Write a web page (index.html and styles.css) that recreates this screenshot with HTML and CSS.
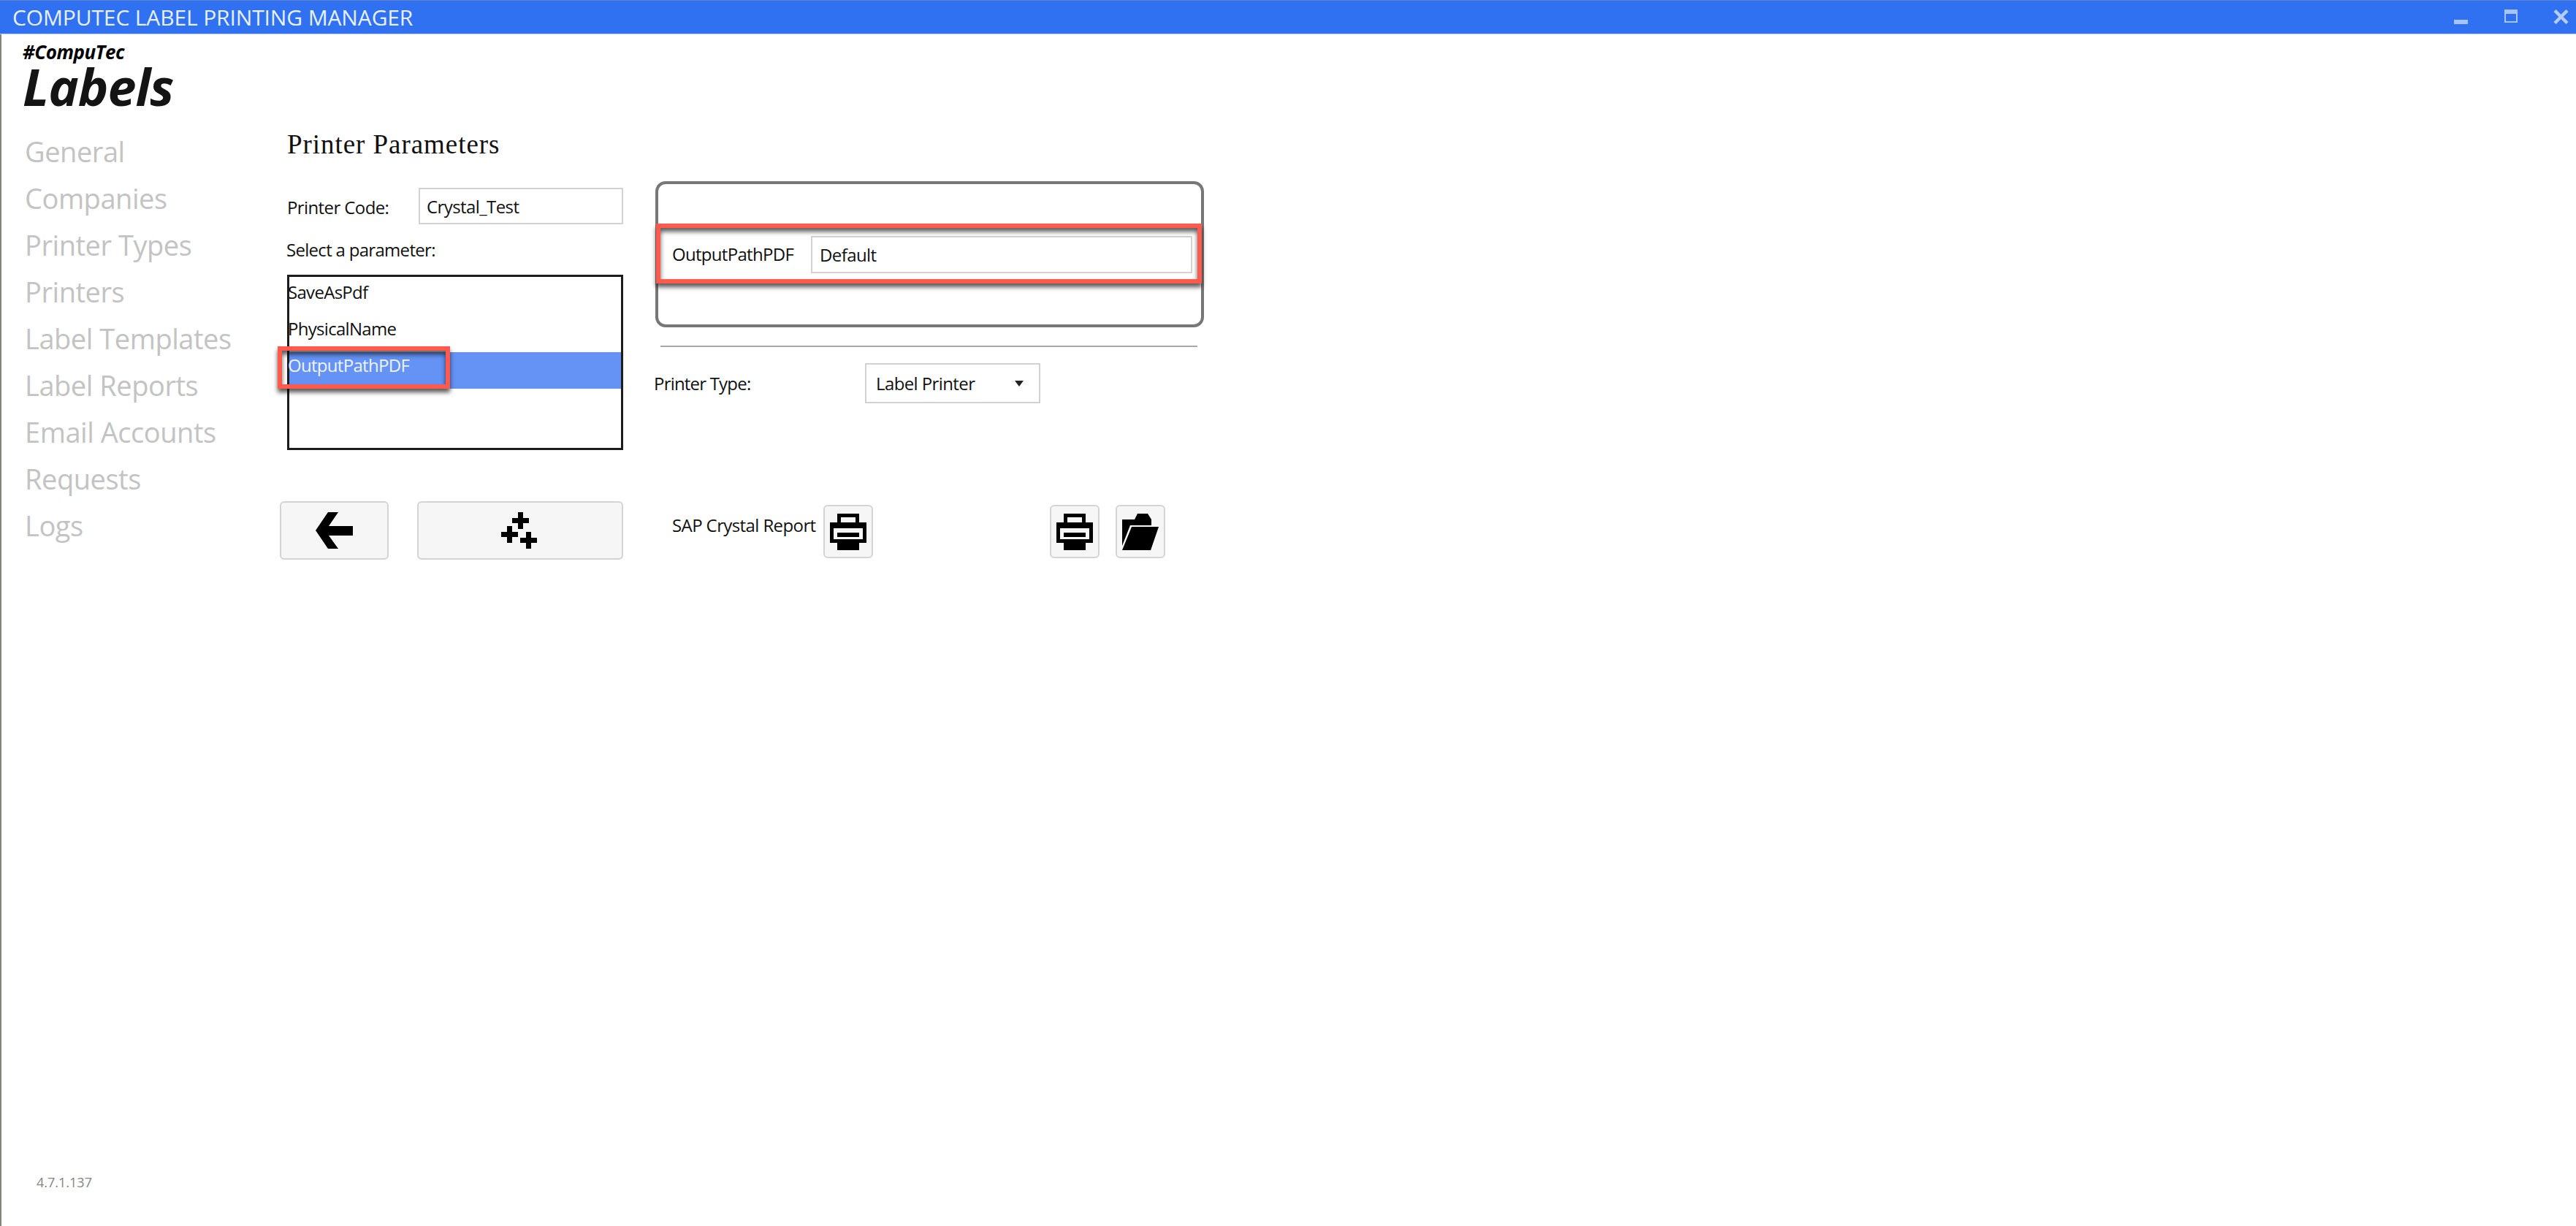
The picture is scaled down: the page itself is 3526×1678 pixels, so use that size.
FILE: index.html
```html
<!DOCTYPE html>
<html lang="en">
<head>
<meta charset="utf-8">
<title>CompuTec Label Printing Manager</title>
<link rel="stylesheet" href="styles.css">
</head>
<body>
<div class="window">
  <header class="titlebar">
    <span class="title">COMPUTEC LABEL PRINTING MANAGER</span>
    <div class="controls">
      <svg class="ctl ctl-min" width="19" height="6" viewBox="0 0 19 6"><rect width="19" height="6" fill="#a6c4f6"/></svg>
      <svg class="ctl ctl-max" width="18" height="18" viewBox="0 0 18 18"><path d="M0 0H18V18H0Z M2 6V16H16V6Z" fill="#a6c4f6" fill-rule="evenodd"/></svg>
      <svg class="ctl ctl-close" width="21" height="20" viewBox="0 0 21 20"><path d="M2 1.5L19 18.500M19 1.500L2 18.500" stroke="#b4cdf8" stroke-width="4.500"/></svg>
    </div>
  </header>
  <div class="body">
    <aside class="sidebar">
      <div class="logo">
        <div class="logo-top">#CompuTec</div>
        <div class="logo-main">Labels</div>
      </div>
      <nav class="nav">
        <div class="nav-item">General</div>
        <div class="nav-item">Companies</div>
        <div class="nav-item">Printer Types</div>
        <div class="nav-item">Printers</div>
        <div class="nav-item">Label Templates</div>
        <div class="nav-item">Label Reports</div>
        <div class="nav-item">Email Accounts</div>
        <div class="nav-item">Requests</div>
        <div class="nav-item">Logs</div>
      </nav>
      <div class="version">4.7.1.137</div>
    </aside>
    <main class="main">
      <h1 class="heading">Printer Parameters</h1>
      <div class="columns">
        <section class="col-left">
          <div class="code-row">
            <span class="label code-label">Printer Code:</span>
            <div class="field code-field">Crystal_Test</div>
          </div>
          <div class="label select-label">Select a parameter:</div>
          <div class="listbox">
            <div class="list-row">SaveAsPdf</div>
            <div class="list-row">PhysicalName</div>
            <div class="list-row selected">OutputPathPDF</div>
            <div class="callout callout-list"></div>
          </div>
          <div class="left-actions">
            <button class="btn btn-back" type="button" aria-label="Back">
              <svg width="51" height="50" viewBox="0 0 51 50"><path d="M17 0H31L18 19H51V32H18L31 50H17L0 25Z" fill="#000"/></svg>
            </button>
            <button class="btn btn-add" type="button" aria-label="Add">
              <svg width="60" height="52" viewBox="0 0 60 52"><path d="M25 1h7v8h8v7h-8v8h-7v-8h-8V9h8zM10 20h7v8h8v7h-8v8h-7v-8H2v-7h8zM36 28h7v8h8v7h-8v8h-7v-8h-8v-7h8z" fill="#000"/></svg>
            </button>
          </div>
        </section>
        <section class="col-right">
          <div class="panel">
            <div class="param-row">
              <span class="label param-label">OutputPathPDF</span>
              <div class="field param-field">Default</div>
            </div>
            <div class="callout callout-panel"></div>
          </div>
          <hr class="divider">
          <div class="type-row">
            <span class="label type-label">Printer Type:</span>
            <div class="field type-select">
              <span>Label Printer</span>
              <svg width="12" height="8" viewBox="0 0 12 8"><path d="M0 0H12L6 8Z" fill="#222"/></svg>
            </div>
          </div>
          <div class="right-actions">
            <span class="label sap-label">SAP Crystal Report</span>
            <button class="btn btn-icon" type="button" aria-label="Print">
              <svg width="50" height="50" viewBox="0 0 50 50"><path fill-rule="evenodd" d="M10 0H40V12H50V40H40V50H10V40H0V12H10ZM15 5V12H35V5ZM5 20V35H45V20Z" fill="#000"/><rect x="10" y="26" width="30" height="6" fill="#000"/></svg>
            </button>
            <button class="btn btn-icon btn-print2" type="button" aria-label="Print to printer">
              <svg width="50" height="50" viewBox="0 0 50 50"><path fill-rule="evenodd" d="M10 0H40V12H50V40H40V50H10V40H0V12H10ZM15 5V12H35V5ZM5 20V35H45V20Z" fill="#000"/><rect x="10" y="26" width="30" height="6" fill="#000"/></svg>
            </button>
            <button class="btn btn-icon btn-folder" type="button" aria-label="Open folder">
              <svg width="50" height="50" viewBox="0 0 50 50"><path d="M0 8H17L21 0H35L40 8V16H11L0 44Z" fill="#000"/><path d="M13 18H50L39 50H0Z" fill="#000"/></svg>
            </button>
          </div>
        </section>
      </div>
    </main>
  </div>
</div>
</body>
</html>
```

FILE: styles.css
```css
* { box-sizing: border-box; }
html, body { margin: 0; padding: 0; height: 100%; background: #fff; }
body { font-family: "Open Sans", "Noto Sans", sans-serif; color: #111; overflow: hidden; }

.window { height: 100vh; display: flex; flex-direction: column; border-left: 2px solid #80867a; }

.titlebar {
  height: 47px; flex: none; display: flex; align-items: center; justify-content: space-between;
  background: #2f71f1; border-top: 1px solid #5c82c8; border-bottom: 1px solid #b9cffa;
  margin-left: -2px; padding-left: 17px;
}
.title { color: #e8f0fe; font-size: 30px; letter-spacing: -0.13px; line-height: 44px; }
.controls { display: flex; align-items: flex-start; height: 44px; }
.ctl { display: block; }
.ctl-min { margin-top: 25px; margin-right: 50px; }
.ctl-max { margin-top: 11px; margin-right: 49px; }
.ctl-close { margin-top: 11px; margin-right: 10px; }

.body { flex: 1; display: flex; min-height: 0; }

.sidebar { width: 381px; flex: none; display: flex; flex-direction: column; padding-left: 29px; }
.logo { padding-top: 9px; height: 128px; }
.logo-top { font-size: 26px; font-weight: 700; font-style: italic; line-height: 31px; color: #000; letter-spacing: -0.5px; }
.logo-main { font-size: 70px; font-weight: 700; font-style: italic; line-height: 62px; color: #141414; letter-spacing: -1px; }
.nav { margin-left: 3px; }
.nav-item { height: 64px; line-height: 64px; font-size: 38px; color: #c3c3c3; letter-spacing: -0.45px; white-space: nowrap; }
.version { margin-top: auto; margin-left: 19px; margin-bottom: 48px; font-size: 18px; line-height: 24px; color: #858585; }

.main { flex: 1; min-width: 0; }
.heading {
  margin: 0 0 0 10px; padding-top: 131px; height: 201px;
  font-family: "Liberation Serif", "Times New Roman", serif; font-weight: 400; font-size: 37px; line-height: 40px; letter-spacing: 0.95px; color: #111;
}

.columns { display: flex; gap: 44px; align-items: flex-start; }

.label { font-size: 24px; line-height: 32px; color: #111; letter-spacing: -0.6px; white-space: nowrap; }

.field {
  border: 2px solid #d2d2d2; background: #fff; font-size: 24px; color: #111; letter-spacing: -0.6px;
  display: flex; align-items: center; white-space: nowrap;
}

.col-left { width: 470px; flex: none; padding-top: 9px; }
.code-row { display: flex; align-items: center; padding-left: 10px; justify-content: space-between; }
.code-label { padding-top: 3px; }
.code-field { width: 280px; height: 50px; padding-left: 9px; }
.select-label { margin: 19px 0 0 9px; height: 50px; letter-spacing: -0.7px; }

.listbox { position: relative; margin-left: 10px; height: 240px; width: 460px; border: 3px solid #1c1c1c; padding-top: 3px; }
.list-row { height: 50px; font-size: 24px; line-height: 35px; letter-spacing: -0.7px; text-indent: -2px; color: #111; }
.list-row.selected { background: #6492f5; color: #eef3ff; }

.callout { position: absolute; border: 6px solid #ff5a4d; box-shadow: 0 5px 6px rgba(0, 0, 0, 0.65), inset 0 5px 6px rgba(0, 0, 0, 0.65); }
.callout-list { left: -16px; top: 95px; width: 236px; height: 58px; }

.left-actions { display: flex; margin-top: 70px; gap: 39px; }

.btn { background: #f6f6f6; border: 2px solid #d4d4d4; border-radius: 6px; padding: 0; display: flex; align-items: center; justify-content: center; }
.btn svg { display: block; }
.btn-back { width: 149px; height: 80px; }
.btn-add { width: 282px; height: 80px; padding-left: 4px; }

.col-right { width: 751px; flex: none; }
.panel { position: relative; height: 200px; border: 4px solid #777; border-radius: 14px; display: flex; align-items: center; padding-left: 19px; }
.param-row { display: flex; align-items: center; }
.param-label { width: 190px; letter-spacing: -0.7px; }
.param-field { width: 522px; height: 51px; padding-left: 10px; }
.callout-panel { left: -3px; top: 54px; width: 747px; height: 82px; }

.divider { margin: 25px 0 0 7px; width: 735px; height: 2px; border: 0; background: #a8a8a8; }

.type-row { display: flex; align-items: center; margin-top: 22px; }
.type-label { width: 287px; letter-spacing: -0.8px; margin-left: -2px; margin-right: 2px; }
.type-select { width: 240px; height: 55px; padding: 0 21px 0 13px; justify-content: space-between; }

.right-actions { display: flex; align-items: center; margin-top: 139px; padding-left: 23px; }
.sap-label { width: 207px; margin-bottom: 18px; }
.btn-icon { width: 68px; height: 73px; flex: none; }
.btn-print2 { margin-left: 242px; }
.btn-folder { margin-left: 22px; }
```
